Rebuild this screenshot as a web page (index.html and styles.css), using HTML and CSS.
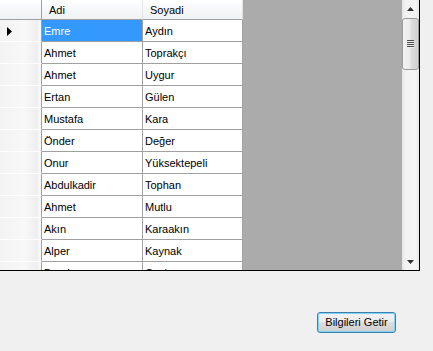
FILE: index.html
```html
<!DOCTYPE html>
<html>
<head>
<meta charset="utf-8">
<link rel="stylesheet" href="styles.css">
</head>
<body>
<div class="grid">
  <div class="view">
    <div class="table">
      <div class="hc corner"></div>
      <div class="hc">Adi</div>
      <div class="hc">Soyadi</div>

      <div class="rh"><svg class="arrow" width="5" height="9" viewBox="0 0 5 9"><polygon points="0,0 5,4.5 0,9" fill="#000"/></svg></div>
      <div class="c sel">Emre</div><div class="c">Aydın</div>
      <div class="rh"></div><div class="c">Ahmet</div><div class="c">Toprakçı</div>
      <div class="rh"></div><div class="c">Ahmet</div><div class="c">Uygur</div>
      <div class="rh"></div><div class="c">Ertan</div><div class="c">Gülen</div>
      <div class="rh"></div><div class="c">Mustafa</div><div class="c">Kara</div>
      <div class="rh"></div><div class="c">Önder</div><div class="c">Değer</div>
      <div class="rh"></div><div class="c">Onur</div><div class="c">Yüksektepeli</div>
      <div class="rh"></div><div class="c">Abdulkadir</div><div class="c">Tophan</div>
      <div class="rh"></div><div class="c">Ahmet</div><div class="c">Mutlu</div>
      <div class="rh"></div><div class="c">Akın</div><div class="c">Karaakın</div>
      <div class="rh"></div><div class="c">Alper</div><div class="c">Kaynak</div>
      <div class="rh"></div><div class="c">Burak</div><div class="c">Coşkun</div>
    </div>
  </div>
  <div class="vscroll">
    <div class="sbtn"><svg width="7" height="4" viewBox="0 0 7 4"><polygon points="3.5,0 7,4 0,4" fill="#303030"/></svg></div>
    <div class="thumb"><span class="grip"></span></div>
    <div class="track"></div>
    <div class="sbtn"><svg width="7" height="4" viewBox="0 0 7 4"><polygon points="0,0 7,0 3.5,4" fill="#303030"/></svg></div>
  </div>
</div>
<div class="actions">
  <button class="btn">Bilgileri Getir</button>
</div>
</body>
</html>
```

FILE: styles.css
```css
html, body {
  margin: 0;
  padding: 0;
}
body {
  background: #f0f0f0;
  width: 433px;
  height: 351px;
  overflow: hidden;
  font-family: "Liberation Sans", Arial, sans-serif;
  font-size: 11px;
  color: #000;
}
.grid {
  width: 420px;
  height: 271px;
  box-sizing: border-box;
  border-right: 1px solid #000;
  border-bottom: 1px solid #000;
  display: flex;
}
.view {
  flex: 1;
  background: #ababab;
  overflow: hidden;
}
.table {
  display: grid;
  grid-template-columns: 42px 101px 100px;
  grid-template-rows: 20px;
  grid-auto-rows: 22px;
}
.hc, .rh, .c {
  box-sizing: border-box;
  display: flex;
  align-items: center;
  white-space: nowrap;
  overflow: hidden;
}
.hc {
  background: linear-gradient(#ffffff 0%, #f7f8fa 45%, #f0f1f3 100%);
  border-bottom: 1px solid #a0a0a0;
  border-right: 1px solid #e2e3e5;
  padding-left: 7px;
}
.hc.corner {
  border-right: 1px solid #a0a0a0;
}
.rh {
  background: linear-gradient(to right, #f3f3f3, #f8f8f8 60%, #eeeeee 92%, #f7f7f7 93%, #f7f7f7);
  border-right: 1px solid #a0a0a0;
  border-bottom: 1px solid #ffffff;
  padding-left: 7px;
}
.c {
  background: #ffffff;
  border-right: 1px solid #a0a0a0;
  border-bottom: 1px solid #a0a0a0;
  padding-left: 2px;
  padding-top: 1px;
}
.c.sel {
  background: #3399ff;
  color: #ffffff;
}
.arrow {
  display: block;
  margin-top: 1px;
}
.vscroll {
  width: 17px;
  display: flex;
  flex-direction: column;
  background: linear-gradient(to right, #e6e6e6, #f2f2f2 20%, #f4f4f4 80%, #e9e9e9);
}
.sbtn {
  height: 17px;
  display: flex;
  align-items: center;
  justify-content: center;
}
.thumb {
  height: 52px;
  margin: 1px 0 0 0;
  box-sizing: border-box;
  border: 1px solid #9a9a9a;
  border-radius: 3px;
  background: linear-gradient(to right, #f3f3f3, #ebebeb 45%, #dcdcdc 55%, #d2d2d2);
  display: flex;
  align-items: center;
  justify-content: center;
}
.grip {
  display: block;
  width: 7px;
  height: 8px;
  background: repeating-linear-gradient(#4d4d4d 0 1px, #eeeeee 1px 2px);
}
.track {
  flex: 1;
}
.actions {
  padding-top: 41px;
  padding-left: 317px;
}
.btn {
  width: 79px;
  height: 21px;
  box-sizing: border-box;
  margin: 0;
  padding: 0 0 1px 0;
  font-family: "Liberation Sans", Arial, sans-serif;
  font-size: 11px;
  color: #000;
  border: 1px solid #3c7fb1;
  border-radius: 3px;
  background: linear-gradient(#f2f2f2 0%, #ebebeb 50%, #dddddd 50%, #cfcfcf 100%);
  box-shadow: inset 0 0 0 1px #7fd3f7;
}
```
